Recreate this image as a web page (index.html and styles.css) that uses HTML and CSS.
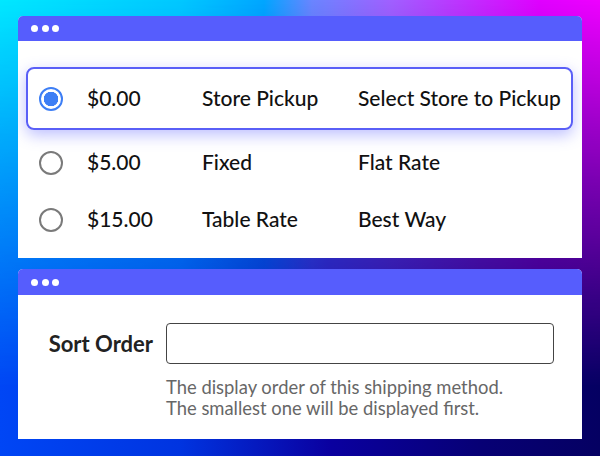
FILE: index.html
```html
<!DOCTYPE html>
<html lang="en">
<head>
    <meta charset="UTF-8">
    <meta name="viewport" content="width=device-width, initial-scale=1.0">
    <title>Shipping Methods</title>
    <link rel="stylesheet" href="styles.css">
</head>
<body>
    <div class="window">
        <div class="window-bar"><span></span><span></span><span></span></div>
        <div class="window-body methods">
            <label class="method selected">
                <input type="radio" name="method" checked>
                <span class="price">$0.00</span>
                <span class="type">Store Pickup</span>
                <span class="title">Select Store to Pickup</span>
            </label>
            <label class="method">
                <input type="radio" name="method">
                <span class="price">$5.00</span>
                <span class="type">Fixed</span>
                <span class="title">Flat Rate</span>
            </label>
            <label class="method">
                <input type="radio" name="method">
                <span class="price">$15.00</span>
                <span class="type">Table Rate</span>
                <span class="title">Best Way</span>
            </label>
        </div>
    </div>

    <div class="window">
        <div class="window-bar tall"><span></span><span></span><span></span></div>
        <div class="window-body sort">
            <label class="sort-label" for="sortOrder">Sort Order</label>
            <input type="text" id="sortOrder" class="sort-input">
            <p class="hint">The display order of this shipping method.<br>The smallest one will be displayed first.</p>
        </div>
    </div>
</body>
</html>
```

FILE: styles.css
```css
body {
    margin: 0;
    height: 456px;
    box-sizing: border-box;
    padding: 16px 18px 0;
    font-family: Lato, "Open Sans", sans-serif;
    color: #111;
    background: linear-gradient(90deg, #0046f5 0%, #0034e0 30%, #0a00a0 55%, #070075 80%, #050062 100%);
    position: relative;
    overflow: hidden;
}
body::before {
    content: "";
    position: absolute;
    inset: 0;
    background: linear-gradient(90deg, #00e8ff 0%, #00c8ff 30%, #00a6ff 44%, #6a85ff 52%, #a060ff 65%, #e000ff 90%, #ee00ff 100%);
    -webkit-mask-image: linear-gradient(to bottom, #000 0%, rgba(0,0,0,0.5) 40%, transparent 85%);
    mask-image: linear-gradient(to bottom, #000 0%, rgba(0,0,0,0.5) 40%, transparent 85%);
}
.window {
    position: relative;
    background: #fff;
    border-radius: 5px 5px 0 0;
    overflow: hidden;
}
.window + .window {
    margin-top: 11px;
}
.window-bar {
    height: 25px;
    background: #565dfd;
    display: flex;
    align-items: center;
    gap: 3.5px;
    padding-left: 13px;
}
.window-bar.tall {
    height: 26px;
}
.window-bar span {
    width: 7px;
    height: 7px;
    border-radius: 50%;
    background: #fff;
}
.methods {
    height: 217px;
    box-sizing: border-box;
    padding: 26px 9px 0 8px;
}
.method {
    display: grid;
    grid-template-columns: 48px 115px 156px 1fr;
    align-items: center;
    box-sizing: border-box;
    height: 57px;
    padding: 0 0 3px 11px;
    border: 2px solid transparent;
    border-radius: 8px;
    font-size: 21px;
    font-weight: 500;
}
.method.selected {
    height: 63px;
    border-color: #5a5ff7;
    box-shadow: 0 5px 15px rgba(90, 95, 255, 0.4);
    margin-bottom: 4px;
}
.method input {
    appearance: none;
    -webkit-appearance: none;
    margin: 3px 0 0;
    width: 24px;
    height: 24px;
    border: 2px solid #7a7a7a;
    border-radius: 50%;
    box-sizing: border-box;
}
.method input:checked {
    border-color: #3d7ef5;
    background: radial-gradient(circle, #3d7ef5 0 7px, #fff 7.5px);
}
.sort {
    height: 144px;
    box-sizing: border-box;
    padding-top: 28px;
    display: grid;
    grid-template-columns: 135px 388px;
    column-gap: 13px;
    align-content: start;
}
.sort-label {
    text-align: right;
    font-weight: bold;
    font-size: 22px;
    color: #222;
    align-self: center;
}
.sort-input {
    height: 41px;
    box-sizing: border-box;
    border: 1.5px solid #444;
    border-radius: 4px;
    margin: 0;
}
.hint {
    grid-column: 2;
    margin: 13px 0 0;
    font-size: 18.4px;
    line-height: 21px;
    color: #676767;
}
```
